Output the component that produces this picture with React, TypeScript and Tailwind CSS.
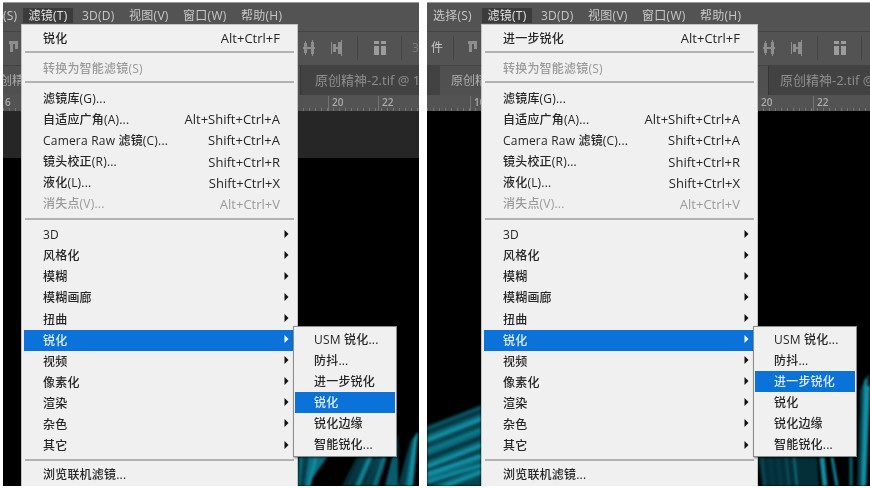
const FONT = "font-['Open_Sans','Noto_Sans_CJK_SC',sans-serif]";

type Row =
  | { sep: string }
  | { label: string; shortcut?: string; sub?: boolean; disabled?: boolean; active?: boolean };

const SEP_A = "h-[9px] pt-[2px]";
const SEP_B = "h-[9.9px] pt-[3px]";
const SEP_C = "h-[7.4px] pt-[2px]";

function menuRows(first: string): Row[] {
  return [
    { label: first, shortcut: "Alt+Ctrl+F" },
    { sep: SEP_A },
    { label: "转换为智能滤镜(S)", disabled: true },
    { sep: SEP_A },
    { label: "滤镜库(G)..." },
    { label: "自适应广角(A)...", shortcut: "Alt+Shift+Ctrl+A" },
    { label: "Camera Raw 滤镜(C)...", shortcut: "Shift+Ctrl+A" },
    { label: "镜头校正(R)...", shortcut: "Shift+Ctrl+R" },
    { label: "液化(L)...", shortcut: "Shift+Ctrl+X" },
    { label: "消失点(V)...", shortcut: "Alt+Ctrl+V", disabled: true },
    { sep: SEP_B },
    { label: "3D", sub: true },
    { label: "风格化", sub: true },
    { label: "模糊", sub: true },
    { label: "模糊画廊", sub: true },
    { label: "扭曲", sub: true },
    { label: "锐化", sub: true, active: true },
    { label: "视频", sub: true },
    { label: "像素化", sub: true },
    { label: "渲染", sub: true },
    { label: "杂色", sub: true },
    { label: "其它", sub: true },
    { sep: SEP_C },
    { label: "浏览联机滤镜..." },
  ];
}

const SUB_ITEMS = ["USM 锐化...", "防抖...", "进一步锐化", "锐化", "锐化边缘", "智能锐化..."];
const TOP_ITEMS = ["3D(D)", "视图(V)", "窗口(W)", "帮助(H)"];

function Arrow({ white }: { white?: boolean }) {
  return (
    <svg width="5" height="8" viewBox="0 0 5 8" className="absolute right-[6px] top-[5px]">
      <path d="M0.5 0 L4.5 4 L0.5 8 Z" fill={white ? "#ffffff" : "#111111"} />
    </svg>
  );
}

function FilterMenu({ rows }: { rows: Row[] }) {
  return (
    <div className="flex h-full w-full flex-col border-l border-r border-t border-[#c4c4c4] bg-[#f0f0f0] px-[2px] pt-[3px] font-medium tracking-[0.2px]">
      {rows.map((row, i) => {
        if ("sep" in row) {
          return (
            <div key={i} className={`shrink-0 px-[1px] ${row.sep}`}>
              <div className="h-[2px] w-full bg-[#b2b2b2]" />
            </div>
          );
        }
        const color = row.active ? "text-[#e3effc] bg-[#0a72d8]" : row.disabled ? "text-[#9a9a9a]" : "text-[#262626]";
        return (
          <div key={i} className={`relative flex h-[21.1px] shrink-0 items-center justify-between pl-[19px] pr-[15px] ${color}`}>
            <span>{row.label}</span>
            {row.shortcut && <span className="text-[13px] font-normal tracking-normal">{row.shortcut}</span>}
            {row.sub && <Arrow white={row.active} />}
          </div>
        );
      })}
    </div>
  );
}

function SubMenu({ activeIndex }: { activeIndex: number }) {
  return (
    <div className="flex h-[131px] w-[104px] flex-col border border-[#8c8c8c] bg-[#f0f0f0] px-[1px] pt-[2px] font-medium tracking-[0.2px] shadow-[1px_1px_2px_rgba(0,0,0,0.5)]">
      {SUB_ITEMS.map((item, i) => (
        <div
          key={item}
          className={`flex h-[21px] shrink-0 items-center pl-[19px] ${i === activeIndex ? "bg-[#0a72d8] text-[#e3effc]" : "text-[#262626]"}`}
        >
          {item}
        </div>
      ))}
    </div>
  );
}

// distribute / align glyphs from the options bar
function ToolIcon({ kind }: { kind: "a" | "b" | "c" | "d" }) {
  return (
    <svg width="14" height="16" viewBox="0 0 14 16" className="shrink-0">
      {kind === "a" && (
        <g fill="#8e8e8e">
          <rect x="0" y="7" width="12" height="2" />
          <rect x="1" y="3" width="3" height="10" />
          <rect x="8" y="2" width="3" height="12" />
          <rect x="2" y="1" width="1" height="14" />
          <rect x="9" y="0" width="1" height="16" />
        </g>
      )}
      {kind === "b" && (
        <g fill="#8e8e8e">
          <rect x="1" y="2" width="1" height="12" />
          <rect x="3" y="4" width="3" height="8" />
          <rect x="8" y="2" width="3" height="12" />
          <rect x="11" y="0" width="1" height="16" />
          <rect x="6" y="7" width="2" height="2" />
        </g>
      )}
      {kind === "c" && (
        <g fill="#9c9c9c">
          <rect x="1" y="1" width="5" height="3" />
          <rect x="8" y="1" width="5" height="3" />
          <rect x="1" y="6" width="5" height="9" />
          <rect x="8" y="6" width="5" height="9" />
        </g>
      )}
      {kind === "d" && (
        <g fill="#8e8e8e">
          <rect x="0" y="1" width="9" height="3" />
          <rect x="1" y="4" width="3" height="8" />
          <rect x="6" y="4" width="3" height="5" />
        </g>
      )}
    </svg>
  );
}

function ToolSep() {
  return <div className="h-[24px] w-px shrink-0 bg-[#444444]" />;
}

function Ruler({ marks }: { marks: { x: number; label: string }[] }) {
  const ticks = Array.from({ length: 90 }, (_, i) => i * 6);
  return (
    <svg width="100%" height="16" className="block shrink-0 bg-[#535353]">
      {ticks.map((x) => (
        <rect key={x} x={x} y="13" width="1" height="3" fill="#757575" />
      ))}
      {marks.map((m) => (
        <g key={m.label}>
          <rect x={m.x} y="1" width="1" height="15" fill="#737373" />
          <text x={m.x + 4} y="11" fontSize="10" fontWeight="600" fill="#acacac" fontFamily="Open Sans, sans-serif">
            {m.label}
          </text>
        </g>
      ))}
    </svg>
  );
}

const TEALS = ["#0b6d7e", "#0f8598", "#054652", "#138ea2", "#0c7486", "#063a45"];

// brush strands: start, end, width picked from a fixed sequence so the picture stays the same
function strands(count: number, fn: (i: number) => [number, number, number, number]) {
  return Array.from({ length: count }, (_, i) => {
    const [x1, y1, x2, y2] = fn(i);
    return (
      <path
        key={i}
        d={`M${x1} ${y1} L${x2} ${y2}`}
        stroke={TEALS[(i * 5 + (i >> 1)) % TEALS.length]}
        strokeWidth={1 + ((i * 7) % 3)}
      />
    );
  });
}

function LeftArt() {
  return (
    <svg width="416" height="375" viewBox="0 0 416 375" className="absolute left-0 top-0 blur-[0.8px]">
      <path d="M295 375 L296 345 L325 345 L304 375 Z" fill="#0b6d7e" />
      {strands(6, (i) => [296 + i * 2, 375, 298 + i * 3, 346])}
      {strands(12, (i) => [340 + i * 3, 375, 355 + i * 2.5, 346])}
      <path d="M382 375 L395 322 L395 375 Z" fill="#0a5c6c" />
      {strands(7, (i) => [396 + i * 2, 375, 408 + i, 330 - i])}
      <path d="M409 375 L414 322" stroke="#138ea2" strokeWidth="2" />
    </svg>
  );
}

function RightArt() {
  return (
    <svg width="443" height="375" viewBox="0 0 443 375" className="absolute left-0 top-0 blur-[0.8px]">
      <path d="M0 315 L54 294 L54 375 L0 375 Z" fill="#054652" />
      {strands(32, (i) => [0, 318 + i * 2.2, 54, 297 + i * 2.2])}
      <path d="M0 363 L54 345" stroke="#138ea2" strokeWidth="4" />
      <path d="M0 371 L54 354" stroke="#0f8598" strokeWidth="4" />
      <path d="M335 375 L331 346 L390 346 L392 375 Z" fill="#042f38" />
      {strands(5, (i) => [338 + i * 8, 375, 335 + i * 8, 346])}
      <path d="M398 375 L395 346" stroke="#138ea2" strokeWidth="5" />
      <path d="M410 375 L405 346" stroke="#0f8598" strokeWidth="3" />
      <path d="M424 375 L424 320" stroke="#0a6676" strokeWidth="3" />
      {strands(8, (i) => [431 + i, 375, 434 + i, 278 - i * 2])}
      <path d="M437 375 L441 275" stroke="#138ea2" strokeWidth="4" />
    </svg>
  );
}

function LeftPanel() {
  return (
    <div className="relative h-full w-[416px] shrink-0 overflow-hidden border-t border-[#9a9a9a] bg-[#535353]">
      <div className="flex h-[28px] items-start pt-[5px] tracking-[0.25px] text-[#c8c8c8]">
        <span className="-ml-[1px] flex h-[15px] w-[21px] items-center pl-[1px]">(S)</span>
        <span className="flex h-[15px] w-[50px] items-center justify-center bg-[#3b3b3b] text-[#e2e2e2]">滤镜(T)</span>
        <div className="ml-[9px] flex h-[15px] items-center gap-[14.5px]">
          {TOP_ITEMS.map((t) => (
            <span key={t}>{t}</span>
          ))}
        </div>
      </div>
      <div className="flex h-[34px] items-center border-t border-[#444444] pb-[2px] pl-[6px]">
        <ToolIcon kind="d" />
        <div className="w-[280px] shrink-0" />
        <ToolIcon kind="a" />
        <div className="w-[13px] shrink-0" />
        <ToolIcon kind="b" />
        <div className="w-[13px] shrink-0" />
        <ToolSep />
        <div className="w-[15px] shrink-0" />
        <ToolIcon kind="c" />
        <div className="w-[14px] shrink-0" />
        <ToolSep />
        <span className="ml-[10px] text-[#7c7c7c]">3D</span>
      </div>
      <div className="flex h-[30px] items-stretch bg-[#424242] pt-[1px] text-[#8f8f8f]">
        <div className="flex w-[297px] shrink-0 items-center overflow-hidden bg-[#505050] text-[#a8a8a8]">
          <span className="-ml-[15px] whitespace-nowrap">原创精神</span>
        </div>
        <div className="flex flex-1 items-center whitespace-nowrap border-l border-[#353535] pl-[14px] text-[13px]">原创精神-2.tif @ 16%</div>
      </div>
      <Ruler marks={[{ x: 325, label: "20" }, { x: 375, label: "22" }, { x: -2, label: "6" }]} />
      <div className="relative h-[375px] bg-black">
        <div className="h-[47px] bg-[#262626]" />
        <LeftArt />
      </div>
      <div className="absolute left-[18px] top-[21px] h-[463px] w-[277px]">
        <FilterMenu rows={menuRows("锐化")} />
      </div>
      <div className="absolute left-[290px] top-[323px]">
        <SubMenu activeIndex={3} />
      </div>
    </div>
  );
}

function RightPanel() {
  return (
    <div className="relative h-full flex-1 overflow-hidden border-t border-[#9a9a9a] bg-[#535353]">
      <div className="flex h-[28px] items-start pt-[5px] tracking-[0.25px] text-[#c8c8c8]">
        <span className="ml-[6px] flex h-[15px] w-[49px] items-center">选择(S)</span>
        <span className="flex h-[15px] w-[50px] items-center justify-center bg-[#3b3b3b] text-[#e2e2e2]">滤镜(T)</span>
        <div className="ml-[9px] flex h-[15px] items-center gap-[14.5px]">
          {TOP_ITEMS.map((t) => (
            <span key={t}>{t}</span>
          ))}
        </div>
      </div>
      <div className="flex h-[34px] items-center border-t border-[#444444] pb-[2px]">
        <span className="w-[26px] shrink-0 pl-[4px] text-[#c8c8c8]">件</span>
        <ToolSep />
        <div className="w-[14px] shrink-0" />
        <ToolIcon kind="d" />
        <div className="w-[281px] shrink-0" />
        <ToolIcon kind="a" />
        <div className="w-[13px] shrink-0" />
        <ToolIcon kind="b" />
        <div className="w-[13px] shrink-0" />
        <ToolSep />
        <div className="w-[15px] shrink-0" />
        <ToolIcon kind="c" />
        <div className="w-[14px] shrink-0" />
        <ToolSep />
      </div>
      <div className="flex h-[30px] items-stretch bg-[#424242] pt-[1px] text-[#8f8f8f]">
        <div className="w-[13px] shrink-0" />
        <div className="flex w-[328px] shrink-0 items-center bg-[#505050] pl-[11px] text-[#b0b0b0]">原创精神</div>
        <div className="flex flex-1 items-center whitespace-nowrap border-l border-[#353535] pl-[11px] text-[13px]">原创精神-2.tif @ 16%</div>
      </div>
      <Ruler marks={[{ x: 43, label: "10" }, { x: 330, label: "20" }, { x: 386, label: "22" }]} />
      <div className="relative h-[375px] bg-black">
        <RightArt />
      </div>
      <div className="absolute left-[54px] top-[21px] h-[463px] w-[277px]">
        <FilterMenu rows={menuRows("进一步锐化")} />
      </div>
      <div className="absolute left-[326px] top-[323px]">
        <SubMenu activeIndex={2} />
      </div>
    </div>
  );
}

export default function App() {
  return (
    <div className={`h-[488px] w-[870px] overflow-hidden bg-white pt-[2px] ${FONT} text-[12px] leading-none blur-[0.3px]`}>
      <div className="flex h-[484px] gap-[8px] pl-[3px]">
        <LeftPanel />
        <RightPanel />
      </div>
    </div>
  );
}
